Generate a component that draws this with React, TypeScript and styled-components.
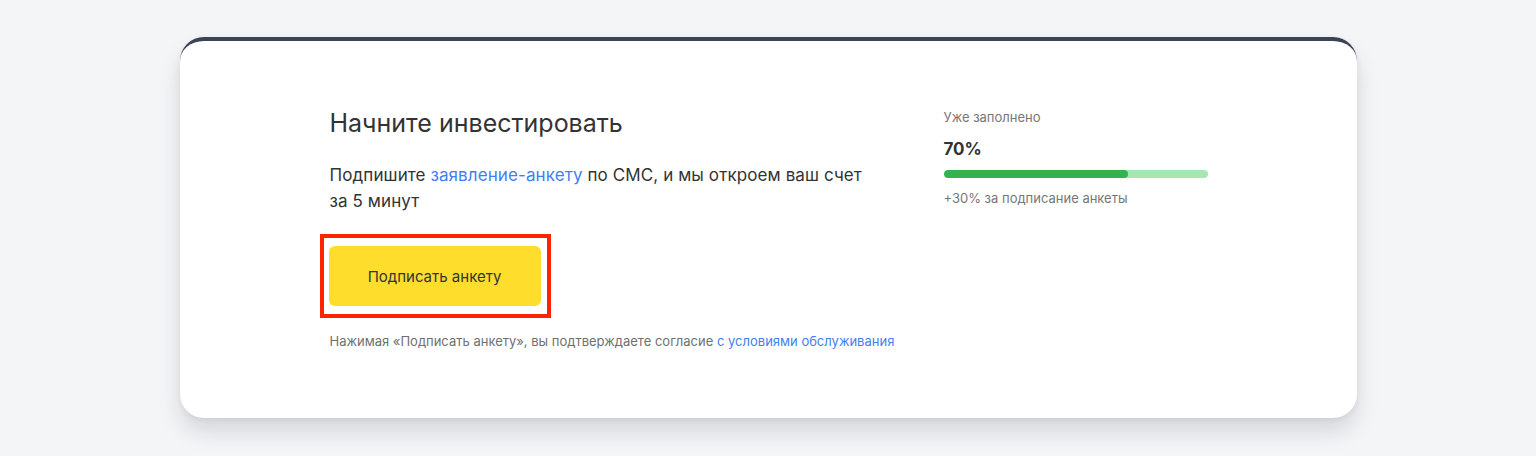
import React from "react";
import styled, { createGlobalStyle } from "styled-components";

const Global = createGlobalStyle`
  html, body { margin: 0; padding: 0; background: #f4f5f7; }
  body { font-family: Inter, "Liberation Sans", Arial, sans-serif; color: #333; }
`;

const Page = styled.div`
  width: 1536px;
  height: 456px;
  box-sizing: border-box;
  padding-top: 37px;
  display: flex;
  justify-content: center;
  align-items: flex-start;
`;

const Card = styled.section`
  width: 1177px;
  height: 381px;
  box-sizing: border-box;
  background: #fff;
  border-radius: 24px;
  border-top: 4px solid #3b4356;
  box-shadow: 0 14px 22px rgba(20, 25, 40, 0.13), 0 2px 6px rgba(20, 25, 40, 0.06);
  padding: 66px 0 0 150px;
  display: grid;
  grid-template-columns: 614px 264px;
  align-items: start;
`;

const Main = styled.div`
  display: flex;
  flex-direction: column;
  align-items: flex-start;
`;

const Title = styled.h1`
  margin: 0;
  font-size: 25px;
  line-height: 32px;
  font-weight: 400;
  color: #333;
`;

const Lead = styled.p`
  margin: 23px 0 0;
  width: 545px;
  font-size: 17px;
  letter-spacing: 0.1px;
  line-height: 26px;
  color: #333;
`;

const Link = styled.a`
  color: #3f7ff2;
  text-decoration: none;
`;

const Highlight = styled.div`
  margin: 20px 0 0 -10px;
  border: 4px solid #ff2400;
  padding: 8px 6px 8px 5px;
  display: flex;
`;

const Button = styled.button`
  width: 212px;
  height: 60px;
  border: none;
  border-radius: 6px;
  background: #ffdd2d;
  font-family: inherit;
  font-size: 15px;
  color: #333;
  cursor: pointer;
`;

const Note = styled.p`
  margin: 14px 0 0;
  font-size: 13px;
  line-height: 18px;
  color: #707070;
`;

const Side = styled.aside`
  display: flex;
  flex-direction: column;
  margin-top: 1px;
`;

const Caption = styled.div`
  font-size: 13px;
  line-height: 18px;
  color: #777;
`;

const Percent = styled.div`
  margin-top: 12px;
  font-size: 17px;
  line-height: 22px;
  font-weight: 700;
  color: #333;
`;

const Track = styled.div`
  margin-top: 10px;
  height: 8px;
  border-radius: 4px;
  background: #a6e6b3;
  overflow: hidden;
`;

const Fill = styled.div`
  height: 100%;
  border-radius: 4px;
  background: #34b24d;
`;

const Hint = styled(Caption)`
  margin-top: 11px;
`;

export default function App() {
  const progress = 70;
  return (
    <>
      <Global />
      <Page>
        <Card>
          <Main>
            <Title>Начните инвестировать</Title>
            <Lead>
              Подпишите <Link href="#">заявление-анкету</Link> по СМС, и мы откроем ваш счет за 5 минут
            </Lead>
            <Highlight>
              <Button>Подписать анкету</Button>
            </Highlight>
            <Note>
              Нажимая «Подписать анкету», вы подтверждаете согласие <Link href="#">с условиями обслуживания</Link>
            </Note>
          </Main>
          <Side>
            <Caption>Уже заполнено</Caption>
            <Percent>{progress}%</Percent>
            <Track>
              <Fill style={{ width: `${progress}%` }} />
            </Track>
            <Hint>+30% за подписание анкеты</Hint>
          </Side>
        </Card>
      </Page>
    </>
  );
}
